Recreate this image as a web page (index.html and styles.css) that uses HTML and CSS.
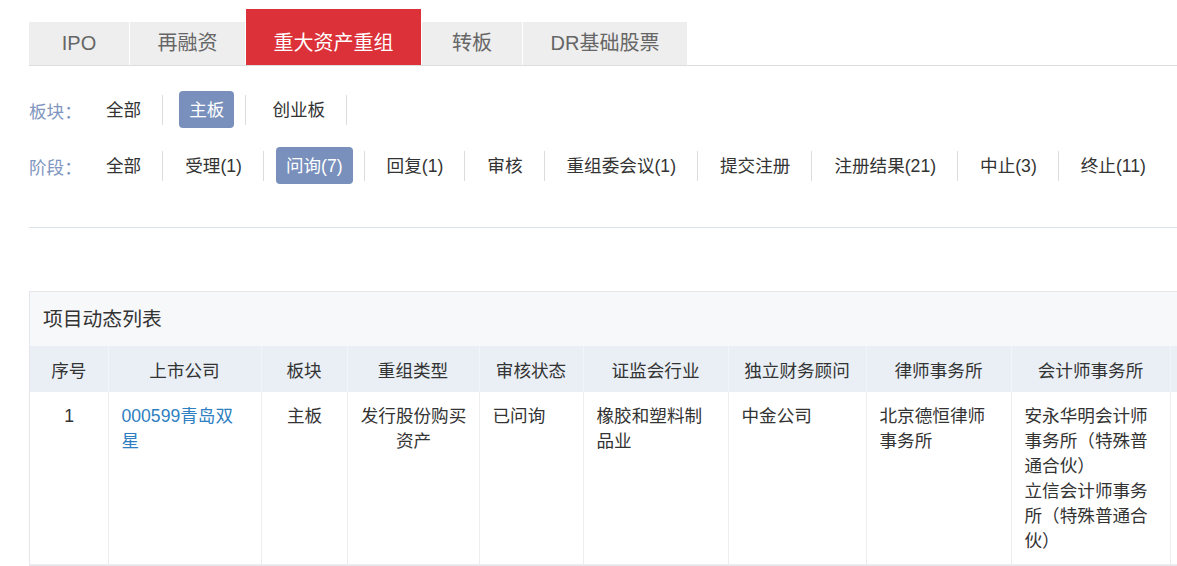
FILE: index.html
```html
<!DOCTYPE html>
<html lang="zh-CN">
<head>
  <meta charset="UTF-8">
  <title>重大资产重组</title>
  <link rel="stylesheet" href="styles.css">
</head>
<body>
  <div class="page">
    <div class="tabs">
      <a class="tab">IPO</a>
      <a class="tab">再融资</a>
      <a class="tab active">重大资产重组</a>
      <a class="tab">转板</a>
      <a class="tab">DR基础股票</a>
    </div>

    <div class="filters">
      <div class="filter-row wide">
        <span class="filter-label">板块：</span>
        <span class="item">全部</span>
        <span class="sep"></span>
        <span class="item on">主板</span>
        <span class="sep"></span>
        <span class="item">创业板</span>
        <span class="sep"></span>
      </div>
      <div class="filter-row">
        <span class="filter-label">阶段：</span>
        <span class="item">全部</span>
        <span class="sep"></span>
        <span class="item">受理(1)</span>
        <span class="sep"></span>
        <span class="item on">问询(7)</span>
        <span class="sep"></span>
        <span class="item">回复(1)</span>
        <span class="sep"></span>
        <span class="item">审核</span>
        <span class="sep"></span>
        <span class="item">重组委会议(1)</span>
        <span class="sep"></span>
        <span class="item">提交注册</span>
        <span class="sep"></span>
        <span class="item">注册结果(21)</span>
        <span class="sep"></span>
        <span class="item">中止(3)</span>
        <span class="sep"></span>
        <span class="item">终止(11)</span>
      </div>
    </div>

    <div class="divider"></div>

    <div class="panel">
      <div class="panel-title">项目动态列表</div>
      <table class="list">
        <colgroup>
          <col style="width:78px">
          <col style="width:153px">
          <col style="width:86px">
          <col style="width:132px">
          <col style="width:104px">
          <col style="width:145px">
          <col style="width:138px">
          <col style="width:145px">
          <col style="width:159px">
          <col style="width:130px">
        </colgroup>
        <thead>
          <tr>
            <th>序号</th>
            <th>上市公司</th>
            <th>板块</th>
            <th>重组类型</th>
            <th>审核状态</th>
            <th>证监会行业</th>
            <th>独立财务顾问</th>
            <th>律师事务所</th>
            <th>会计师事务所</th>
            <th></th>
          </tr>
        </thead>
        <tbody>
          <tr>
            <td class="center">1</td>
            <td><a class="link">000599青岛双星</a></td>
            <td class="center">主板</td>
            <td class="center">发行股份购买资产</td>
            <td>已问询</td>
            <td>橡胶和塑料制品业</td>
            <td>中金公司</td>
            <td>北京德恒律师事务所</td>
            <td>安永华明会计师事务所（特殊普通合伙）<br>立信会计师事务所（特殊普通合伙）</td>
            <td></td>
          </tr>
        </tbody>
      </table>
    </div>
  </div>
</body>
</html>
```

FILE: styles.css
```css
html, body {
  margin: 0;
  padding: 0;
  overflow: hidden;
  background: #fff;
}

body {
  font-family: 'Liberation Sans', 'Noto Sans CJK SC', sans-serif;
  color: #333;
}

.page {
  width: 1340px;
  padding: 9px 0 0 29px;
}

/* top tabs */
.tabs {
  display: flex;
  align-items: flex-end;
  gap: 1px;
  border-bottom: 1px solid #dddddd;
}

.tab {
  box-sizing: border-box;
  min-width: 100px;
  height: 43px;
  line-height: 43px;
  padding: 0 27.5px;
  text-align: center;
  font-size: 20px;
  color: #666;
  background: #eeeeee;
  cursor: pointer;
}

.tab.active {
  height: 56px;
  padding-top: 13px;
  background: #dc3139;
  color: #fff;
}

/* filters */
.filters {
  padding: 25px 0 0;
}

.filter-row {
  display: flex;
  align-items: center;
  height: 37px;
  margin-bottom: 19px;
  font-size: 17.6px;
}

.filter-row:last-child {
  margin-bottom: 0;
}

.filter-label {
  width: 67px;
  padding-top: 2px;
  color: #8096c0;
}

.item {
  padding: 2px 10px 0;
  line-height: 35px;
  border-radius: 4px;
  color: #333;
  cursor: pointer;
}

.item.on {
  background: #7890bb;
  color: #fff;
}

.sep {
  width: 1px;
  height: 30px;
  margin: 0 12px 0 11px;
  background: #dcdcdc;
}

.filter-row.wide .sep {
  margin-right: 16px;
}

.divider {
  height: 1px;
  margin-top: 43px;
  background: #dbe2ec;
}

/* list panel */
.panel {
  margin-top: 63px;
  border: 1px solid #e4e6e9;
  border-right: none;
}

.panel-title {
  height: 54px;
  line-height: 54px;
  padding-left: 13px;
  font-size: 19.8px;
  background: #f7f8fa;
}

.list {
  table-layout: fixed;
  border-collapse: collapse;
  font-size: 17.6px;
}

.list th {
  height: 46px;
  padding: 0 8px;
  font-weight: normal;
  background: #e9eff5;
  border-left: 1px solid #f1f4f8;
  text-align: center;
}

.list th:first-child,
.list td:first-child {
  border-left: none;
}

.list td {
  padding: 12px 10px 10px 13px;
  line-height: 25px;
  vertical-align: top;
  text-align: left;
  border-left: 1px solid #ebedf0;
  border-bottom: 1px solid #ebedf0;
}

.list td.center {
  text-align: center;
  padding-left: 11px;
}

.link {
  color: #2e7fc1;
  cursor: pointer;
}
```
